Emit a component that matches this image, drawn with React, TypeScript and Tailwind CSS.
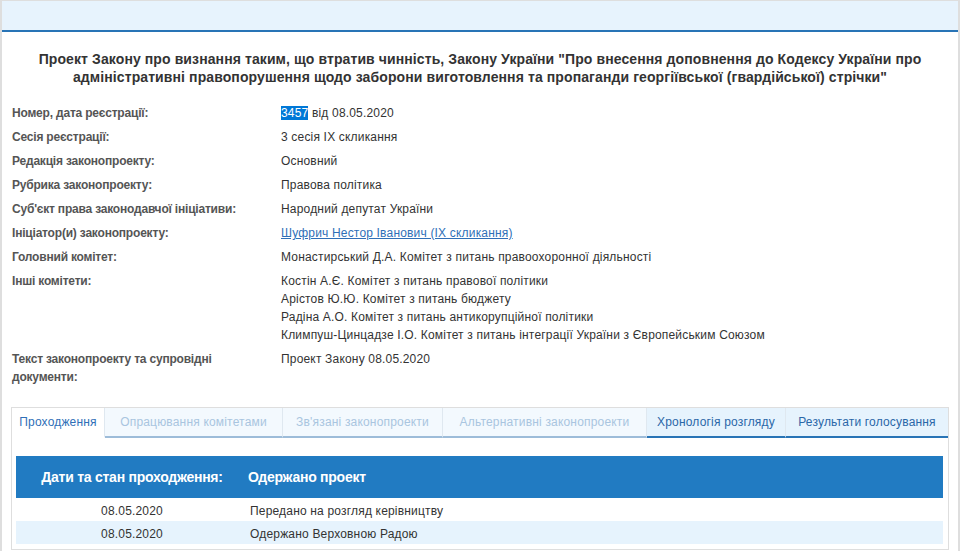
import React from 'react';

const rows: { label: string; values: React.ReactNode[] }[] = [
  {
    label: 'Номер, дата реєстрації:',
    values: [
      <span key="n">
        <span className="bg-[#0078d7] text-white">3457</span> від 08.05.2020
      </span>,
    ],
  },
  { label: 'Сесія реєстрації:', values: ['3 сесія IX скликання'] },
  { label: 'Редакція законопроекту:', values: ['Основний'] },
  { label: 'Рубрика законопроекту:', values: ['Правова політика'] },
  { label: "Суб'єкт права законодавчої ініціативи:", values: ['Народний депутат України'] },
  {
    label: 'Ініціатор(и) законопроекту:',
    values: [
      <a key="l" href="#" className="text-[#2f6fb7] underline">
        Шуфрич Нестор Іванович (IX скликання)
      </a>,
    ],
  },
  { label: 'Головний комітет:', values: ['Монастирський Д.А. Комітет з питань правоохоронної діяльності'] },
  {
    label: 'Інші комітети:',
    values: [
      'Костін А.Є. Комітет з питань правової політики',
      'Арістов Ю.Ю. Комітет з питань бюджету',
      'Радіна А.О. Комітет з питань антикорупційної політики',
      'Климпуш-Цинцадзе І.О. Комітет з питань інтеграції України з Європейським Союзом',
    ],
  },
  { label: 'Текст законопроекту та супровідні документи:', values: ['Проект Закону 08.05.2020'] },
];

const tabs = [
  { name: 'Проходження', w: 'w-[93px]', kind: 'current' },
  { name: 'Опрацювання комітетами', w: 'w-[178px]', kind: 'muted' },
  { name: "Зв'язані законопроекти", w: 'w-[160px]', kind: 'muted' },
  { name: 'Альтернативні законопроекти', w: 'w-[204px]', kind: 'muted' },
  { name: 'Хронологія розгляду', w: 'w-[139px]', kind: 'active' },
  { name: 'Результати голосування', w: 'w-[162px]', kind: 'active' },
];

const tabStyle: Record<string, string> = {
  current: 'bg-white text-[#2f6fb7] border-b-2 border-b-white',
  muted: 'bg-[#f3f9fe] text-[#a9c5e0] border-b-2 border-b-[#9dbcd9]',
  active: 'bg-[#e6f3fd] text-[#2a67a8] border-b-2 border-b-[#2874b6]',
};

const history = [
  { date: '08.05.2020', text: 'Передано на розгляд керівництву' },
  { date: '08.05.2020', text: 'Одержано Верховною Радою' },
];

export default function App() {
  return (
    <div className="w-[964px] h-[551px] overflow-hidden bg-white font-['Liberation_Sans',Arial,sans-serif] text-[12px] text-[#333] tracking-[0.18px]">
      <div className="w-[960px] h-full border-t border-l-2 border-r-2 border-[#dedede]">
        <div className="h-[31px] bg-[#e7f3fd] border-b-2 border-[#2874b6]" />

        <h1 className="pt-[18px] px-4 text-center text-[14px] leading-[18px] font-bold text-[#333] tracking-[0.1px]">
          Проект Закону про визнання таким, що втратив чинність, Закону України "Про внесення доповнення до Кодексу України про
          адміністративні правопорушення щодо заборони виготовлення та пропаганди георгіївської (гвардійської) стрічки"
        </h1>

        <div className="mt-[15px] pl-[10px]">
          {rows.map((r) => (
            <div key={r.label} className="flex py-[3px] leading-[18px]">
              <div className="w-[269px] shrink-0 pr-[30px] font-bold text-[#555] tracking-[-0.2px]">{r.label}</div>
              <div>
                {r.values.map((v, i) => (
                  <div key={i}>{v}</div>
                ))}
              </div>
            </div>
          ))}
        </div>

        <div className="mt-[18px] ml-[9px] w-[938px] border border-[#dedede]">
          <div className="flex">
            {tabs.map((t, i) => (
              <div
                key={t.name}
                className={`${t.w} h-[30px] flex items-center justify-center ${tabStyle[t.kind]} ${
                  i < tabs.length - 1 ? 'border-r border-r-[#dfe8f0]' : ''
                }`}
              >
                {t.name}
              </div>
            ))}
          </div>

          <div className="pt-[18px] pl-[4px] pr-[5px] pb-[5px]">
            <div className="flex h-[42px] items-center bg-[#217bc2] text-white text-[14px] font-bold tracking-[-0.25px]">
              <div className="w-[232px] text-center">Дати та стан проходження:</div>
              <div>Одержано проект</div>
            </div>
            {history.map((h, i) => (
              <div key={i} className={`flex h-[23px] items-center pt-[3px] ${i % 2 ? 'bg-[#e6f3fd]' : 'bg-white'}`}>
                <div className="w-[232px] text-center">{h.date}</div>
                <div className="pl-[2px]">{h.text}</div>
              </div>
            ))}
          </div>
        </div>
      </div>
    </div>
  );
}
